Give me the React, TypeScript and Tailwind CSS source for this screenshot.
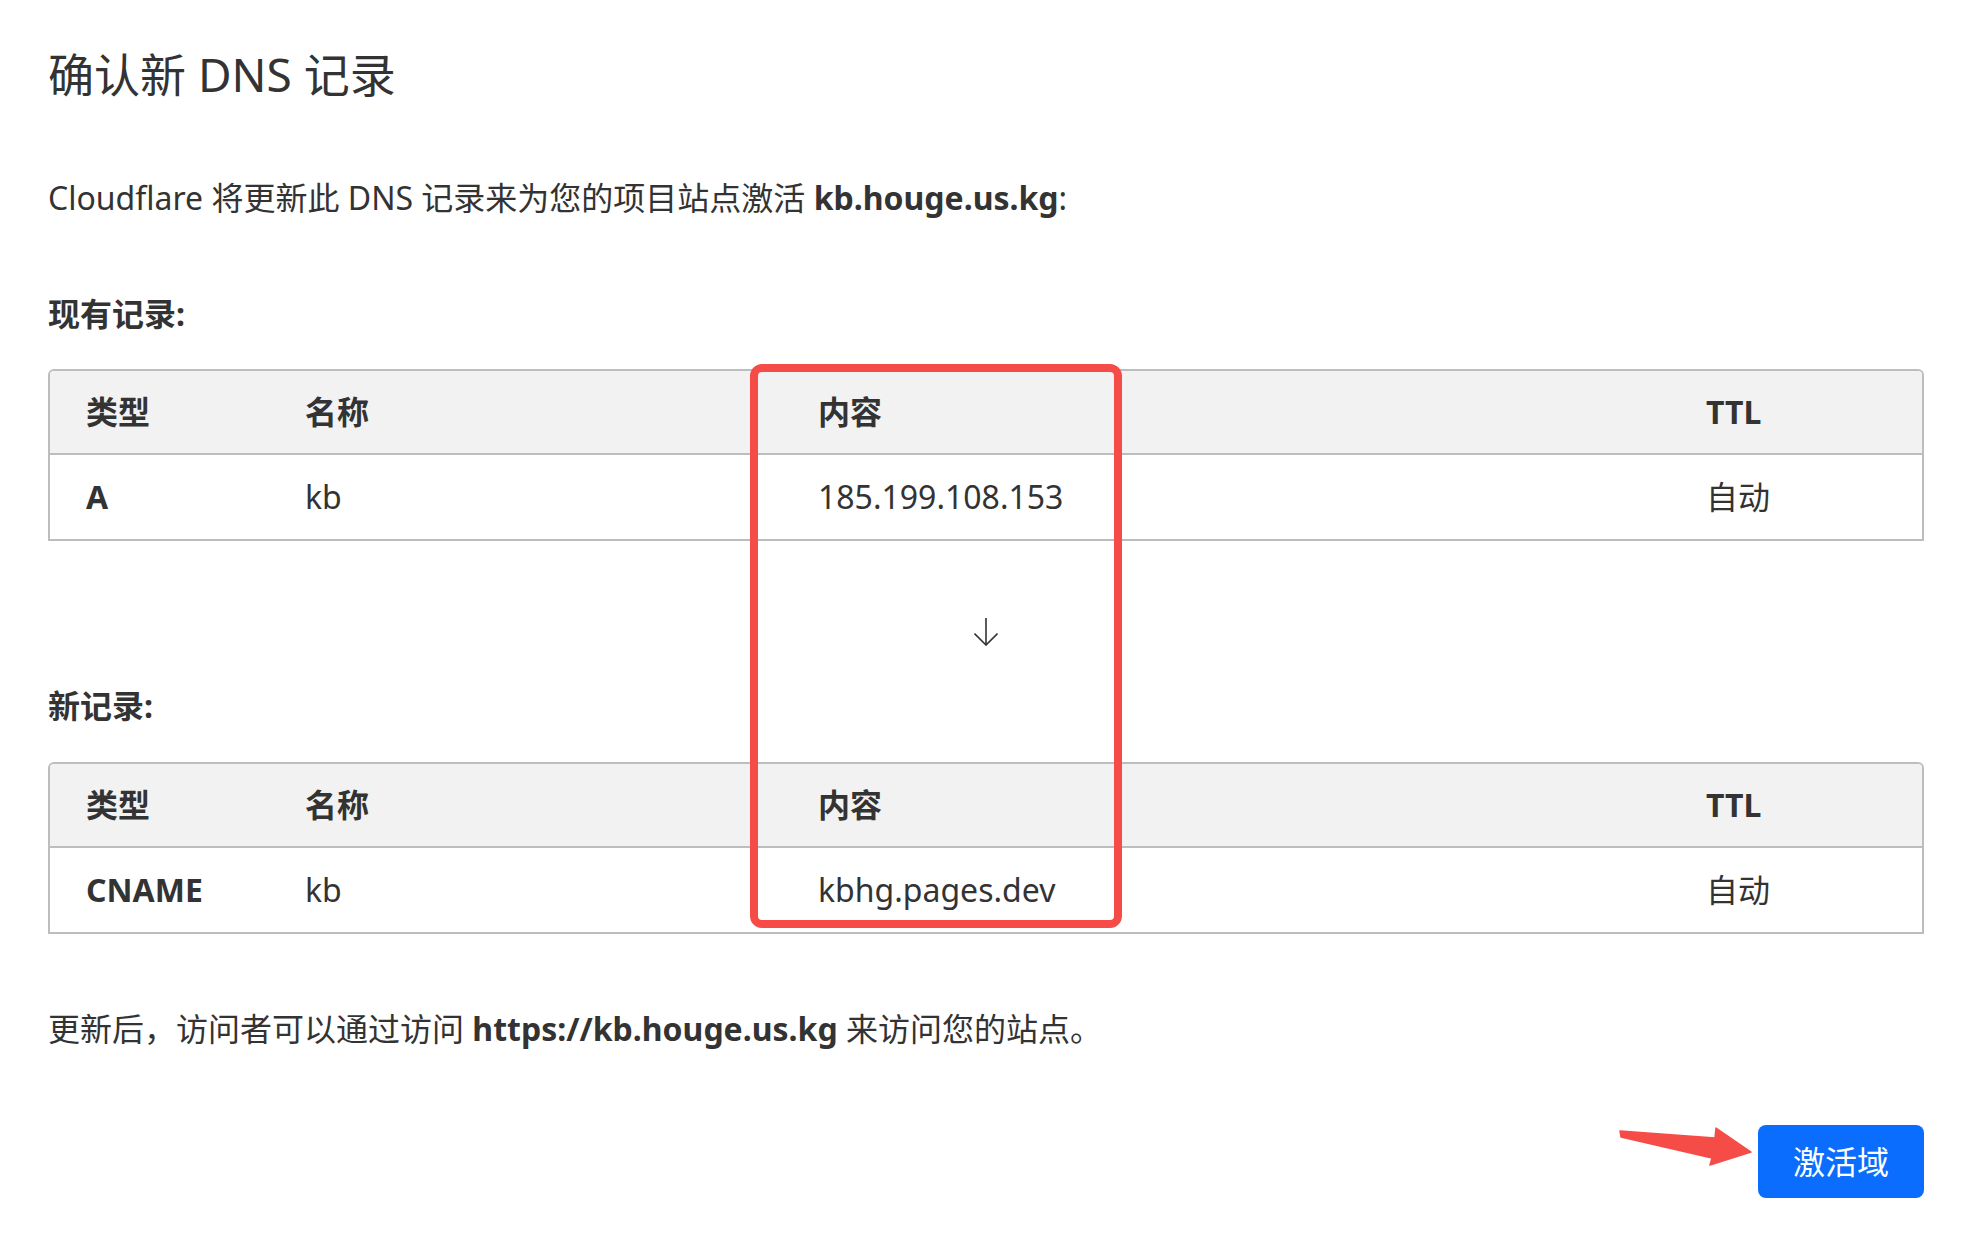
type DnsRow = {
  type: string;
  name: string;
  content: string;
  ttl: string;
};

const existing: DnsRow = { type: "A", name: "kb", content: "185.199.108.153", ttl: "自动" };
const next: DnsRow = { type: "CNAME", name: "kb", content: "kbhg.pages.dev", ttl: "自动" };

function RecordTable({ row }: { row: DnsRow }) {
  return (
    <div className="border-2 border-[#bdbdbd] rounded-t-md overflow-hidden">
      <div className="grid grid-cols-[219px_513px_888px_1fr] h-[84px] bg-[#f2f2f2] border-b-2 border-[#bdbdbd] font-bold">
        <div className="flex items-center pl-9">类型</div>
        <div className="flex items-center pl-9">名称</div>
        <div className="flex items-center pl-9">内容</div>
        <div className="flex items-center pl-9">TTL</div>
      </div>
      <div className="grid grid-cols-[219px_513px_888px_1fr] h-[84px] bg-white">
        <div className="flex items-center pl-9 font-bold">{row.type}</div>
        <div className="flex items-center pl-9">{row.name}</div>
        <div className="flex items-center pl-9">{row.content}</div>
        <div className="flex items-center pl-9">{row.ttl}</div>
      </div>
    </div>
  );
}

export default function App() {
  return (
    <div className="relative min-h-[1256px] bg-white px-12 pt-[46px] text-[#333] text-[32px] leading-[44px] font-['Noto_Sans','Noto_Sans_CJK_SC',sans-serif]">
      <h1 className="text-[46px] leading-[56px] font-normal">确认新 DNS 记录</h1>

      <p className="mt-[74px]">
        Cloudflare 将更新此 DNS 记录来为您的项目站点激活 <b>kb.houge.us.kg</b>:
      </p>

      <div className="mt-[72px] font-bold">现有记录:</div>

      <div className="mt-[33px]">
        <RecordTable row={existing} />
      </div>

      <div className="flex justify-center pt-[77px]">
        <svg width="24" height="28" viewBox="0 0 24 28" fill="none" stroke="#333" strokeWidth="1.6">
          <path d="M12 0v27" />
          <path d="M0.5 15.5 12 27l11.5-11.5" />
        </svg>
      </div>

      <div className="mt-[38px] font-bold">新记录:</div>

      <div className="mt-[34px]">
        <RecordTable row={next} />
      </div>

      <p className="mt-[73px]">
        更新后，访问者可以通过访问 <b>https://kb.houge.us.kg</b> 来访问您的站点。
      </p>

      <div className="mt-[74px] flex justify-end items-start gap-1">
        <svg width="137" height="46" viewBox="1618 1125 137 46">
          <polygon
            points="1621,1131 1716,1138 1717,1128 1752,1152 1711,1165 1713,1158 1622,1137"
            fill="#f64c48"
            stroke="#f64c48"
            strokeWidth="1.5"
            strokeLinejoin="round"
          />
        </svg>
        <button className="w-[166px] h-[73px] rounded-lg bg-[#0a6dfe] text-white text-[32px]">
          激活域
        </button>
      </div>

      {/* red highlight drawn over the content column */}
      <div className="absolute left-[750px] top-[364px] w-[372px] h-[564px] border-8 border-[#f64c48] rounded-xl pointer-events-none" />
    </div>
  );
}
